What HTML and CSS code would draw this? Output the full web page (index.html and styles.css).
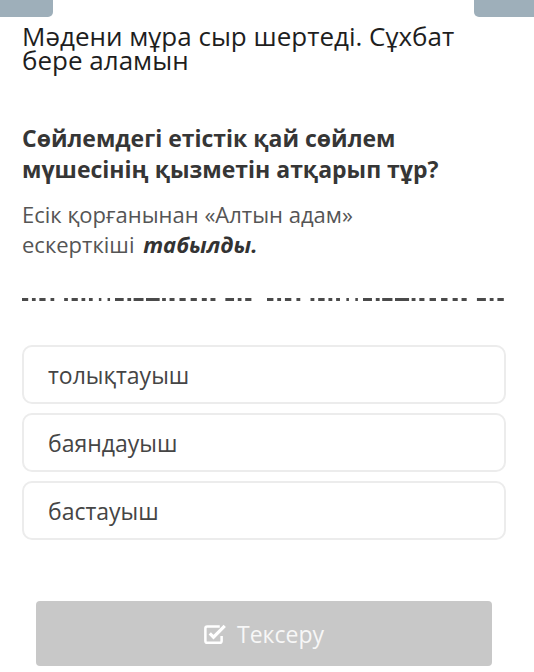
FILE: index.html
```html
<!DOCTYPE html>
<html lang="kk">
<head>
<meta charset="utf-8">
<link rel="stylesheet" href="styles.css">
</head>
<body>
<div class="tabs">
  <div class="tab tab-left"></div>
  <div class="tab tab-right"></div>
</div>
<div class="content">
  <h1 class="title">Мәдени мұра сыр шертеді. Сұхбат бере аламын</h1>
  <h2 class="question">Сөйлемдегі етістік қай сөйлем мүшесінің қызметін атқарып тұр?</h2>
  <p class="sentence">Есік қорғанынан «Алтын адам» ескерткіші <b class="emph">табылды.</b></p>
  <svg class="dashes" width="484" height="4" viewBox="0 0 484 4">
    <g fill="#4a4a4a" transform="scale(1.24 1)">
      <rect x="0" y="0" width="5" height="3"/><rect x="8" y="0" width="3" height="3"/><rect x="14" y="0" width="5" height="3"/><rect x="23" y="0" width="3" height="3"/>
      <rect x="34" y="0" width="3" height="3"/><rect x="40" y="0" width="5" height="3"/><rect x="48" y="0" width="3" height="3"/><rect x="54" y="0" width="3" height="3"/>
      <rect x="62" y="0" width="2" height="3"/><rect x="69" y="0" width="2" height="3"/><rect x="75" y="0" width="7" height="3"/><rect x="85" y="0" width="3" height="3"/>
      <rect x="90" y="0" width="8" height="3"/><rect x="100" y="0" width="11" height="3"/><rect x="113" y="0" width="3" height="3"/><rect x="119" y="0" width="4" height="3"/>
      <rect x="127" y="0" width="5" height="3"/><rect x="136" y="0" width="5" height="3"/><rect x="145" y="0" width="4" height="3"/><rect x="152" y="0" width="4" height="3"/>
      <rect x="164" y="0" width="7" height="3"/><rect x="174" y="0" width="3" height="3"/><rect x="180" y="0" width="5" height="3"/>
    </g>
    <g fill="#4a4a4a" transform="translate(245 0) scale(1.28 1)">
      <rect x="0" y="0" width="5" height="3"/><rect x="8" y="0" width="3" height="3"/><rect x="14" y="0" width="5" height="3"/><rect x="23" y="0" width="3" height="3"/>
      <rect x="34" y="0" width="3" height="3"/><rect x="40" y="0" width="5" height="3"/><rect x="48" y="0" width="3" height="3"/><rect x="54" y="0" width="3" height="3"/>
      <rect x="62" y="0" width="2" height="3"/><rect x="69" y="0" width="2" height="3"/><rect x="75" y="0" width="7" height="3"/><rect x="85" y="0" width="3" height="3"/>
      <rect x="90" y="0" width="8" height="3"/><rect x="100" y="0" width="11" height="3"/><rect x="113" y="0" width="3" height="3"/><rect x="119" y="0" width="4" height="3"/>
      <rect x="127" y="0" width="5" height="3"/><rect x="136" y="0" width="5" height="3"/><rect x="145" y="0" width="4" height="3"/><rect x="152" y="0" width="4" height="3"/>
      <rect x="164" y="0" width="7" height="3"/><rect x="174" y="0" width="3" height="3"/><rect x="180" y="0" width="5" height="3"/>
    </g>
  </svg>
  <div class="options">
    <div class="option">толықтауыш</div>
    <div class="option">баяндауыш</div>
    <div class="option">бастауыш</div>
  </div>
</div>
<div class="actions">
  <button class="check-btn" type="button">
    <svg class="check-icon" width="24" height="20" viewBox="1 1 19 16">
      <path d="M15 10.5V14.5a1.5 1.5 0 0 1-1.5 1.5h-10A1.5 1.5 0 0 1 2 14.5v-10A1.5 1.5 0 0 1 3.5 3h10" fill="none" stroke="#fff" stroke-width="2"/>
      <path d="M5.5 8.5l3 3 9-9" fill="none" stroke="#fff" stroke-width="2.6"/>
    </svg>
    <span>Тексеру</span>
  </button>
</div>
</body>
</html>
```

FILE: styles.css
```css
* { box-sizing: border-box; }
html, body { margin: 0; padding: 0; background: #fff; }
body {
  font-family: "Open Sans", "Noto Sans", sans-serif;
  width: 534px;
  height: 672px;
  overflow: hidden;
}
.tabs {
  display: flex;
  justify-content: space-between;
  height: 17px;
}
.tab {
  height: 17px;
  background: #9eafba;
}
.tab-left {
  width: 53px;
  border-bottom-right-radius: 5px;
}
.tab-right {
  width: 60px;
  border-bottom-left-radius: 5px;
}
.content {
  padding: 0 28px 0 22px;
}
.title {
  margin: 7px 0 0;
  font-size: 26px;
  line-height: 24px;
  font-weight: 400;
  color: #1e1e1e;
}
.question {
  margin: 51px 0 0;
  padding-right: 40px;
  font-size: 23px;
  line-height: 31px;
  font-weight: 700;
  color: #363636;
}
.sentence {
  margin: 14px 0 0;
  padding-right: 40px;
  font-size: 22px;
  line-height: 30px;
  color: #555;
}
.emph {
  display: inline-block;
  font-style: italic;
  font-weight: 700;
  color: #333;
  margin-left: 3px;
}
.dashes {
  display: block;
  margin-top: 39px;
}
.options {
  display: flex;
  flex-direction: column;
  gap: 9px;
  margin-top: 43px;
}
.option {
  height: 59px;
  border: 2px solid #ececec;
  border-radius: 10px;
  padding-left: 24px;
  display: flex;
  align-items: center;
  font-size: 23px;
  color: #454545;
}
.actions {
  padding: 61px 42px 0 36px;
}
.check-btn {
  width: 100%;
  height: 65px;
  border: none;
  border-radius: 4px;
  background: #c8c8c8;
  color: #f7f7f7;
  font-family: "Open Sans", "Noto Sans", sans-serif;
  font-size: 23px;
  display: flex;
  align-items: center;
  justify-content: center;
  gap: 9px;
  padding: 0;
}
.check-icon { display: block; }
```
